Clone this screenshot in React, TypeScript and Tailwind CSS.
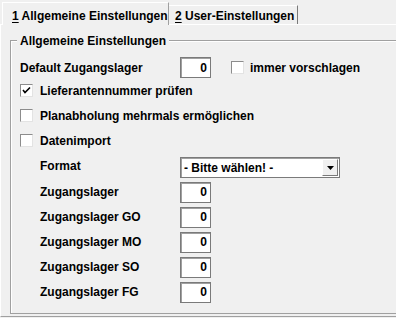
import React from "react";

const Box = ({ value }: { value: string }) => (
  <div className="w-[31px] h-[21px] bg-white border border-[#7a7a7a] shadow-[inset_1px_1px_0_#a0a0a0] flex items-center justify-end pr-[3px]">
    {value}
  </div>
);

const Check = ({ checked }: { checked?: boolean }) => (
  <div className="w-[13px] h-[13px] bg-white border border-t-[#8c8c8c] border-l-[#8c8c8c] border-r-[#e3e3e3] border-b-[#e3e3e3] flex items-center justify-center shrink-0">
    {checked && (
      <svg width="9" height="9" viewBox="0 0 9 9">
        <path d="M1 4 L3 6.5 L8 1.5" stroke="#000" strokeWidth="1.6" fill="none" />
      </svg>
    )}
  </div>
);

const CheckRow = ({ label, checked }: { label: string; checked?: boolean }) => (
  <div className="h-[25px] flex items-center">
    <Check checked={checked} />
    <span className="ml-[7px]">{label}</span>
  </div>
);

const LagerRow = ({ label }: { label: string }) => (
  <div className="h-[20px] flex items-center">
    <span className="w-[160px] shrink-0 pl-[20px]">{label}</span>
    <Box value="0" />
  </div>
);

export default function App() {
  return (
    <div
      className="w-[396px] h-[318px] bg-[#f0f0f0] overflow-hidden text-[12px] font-bold text-black leading-[14px]"
      style={{ fontFamily: '"Liberation Sans", Arial, sans-serif' }}
    >
      {/* tabs */}
      <div className="flex items-end pl-[2px] pt-[2px] h-[24px]">
        <div className="relative z-10 w-[167px] h-[23px] -mb-[1px] bg-[#f0f0f0] border-t border-l border-white border-r border-r-[#a0a0a0] pl-[9px] pt-[6px] whitespace-nowrap">
          <span className="underline underline-offset-2">1</span> Allgemeine Einstellungen
        </div>
        <div className="w-[129px] h-[19px] border-t border-white border-r border-r-[#7a7a7a] pl-[6px] pt-[3px] whitespace-nowrap">
          <span className="underline underline-offset-2">2</span> User-Einstellungen
        </div>
      </div>

      {/* panel */}
      <div className="w-[420px] h-[293px] border-t border-l border-white border-b border-b-[#a0a0a0] pl-[9px] pt-[15px]">
        <div className="relative w-[420px] h-[274px] border border-[#a0a0a0] shadow-[inset_1px_1px_0_white] pl-[9px] pt-[16px]">
          <span className="absolute left-[6px] -top-[7px] bg-[#f0f0f0] px-[3px]">Allgemeine Einstellungen</span>

          <div className="h-[21px] flex items-center">
            <span className="w-[160px] shrink-0">Default Zugangslager</span>
            <Box value="0" />
            <div className="ml-[20px] flex items-center">
              <Check />
              <span className="ml-[6px]">immer vorschlagen</span>
            </div>
          </div>

          <CheckRow label="Lieferantennummer prüfen" checked />
          <CheckRow label="Planabholung mehrmals ermöglichen" />
          <CheckRow label="Datenimport" />

          <div className="mt-[4px] h-[21px] flex items-center">
            <span className="w-[160px] shrink-0 pl-[20px] -mt-[4px]">Format</span>
            <div className="w-[160px] h-[21px] bg-white border border-[#7a7a7a] shadow-[inset_1px_1px_0_#a0a0a0] flex items-center">
              <span className="flex-1 pl-[3px]">- Bitte wählen! -</span>
              <div className="w-[16px] h-[17px] mr-[1px] bg-[#f0f0f0] border border-t-white border-l-white border-r-[#7a7a7a] border-b-[#7a7a7a] flex items-center justify-center">
                <svg width="7" height="4" viewBox="0 0 7 4">
                  <path d="M0 0 H7 L3.5 4 Z" fill="#000" />
                </svg>
              </div>
            </div>
          </div>

          <div className="mt-[4px] flex flex-col gap-[5px]">
            <LagerRow label="Zugangslager" />
            <LagerRow label="Zugangslager GO" />
            <LagerRow label="Zugangslager MO" />
            <LagerRow label="Zugangslager SO" />
            <LagerRow label="Zugangslager FG" />
          </div>
        </div>
      </div>
    </div>
  );
}
